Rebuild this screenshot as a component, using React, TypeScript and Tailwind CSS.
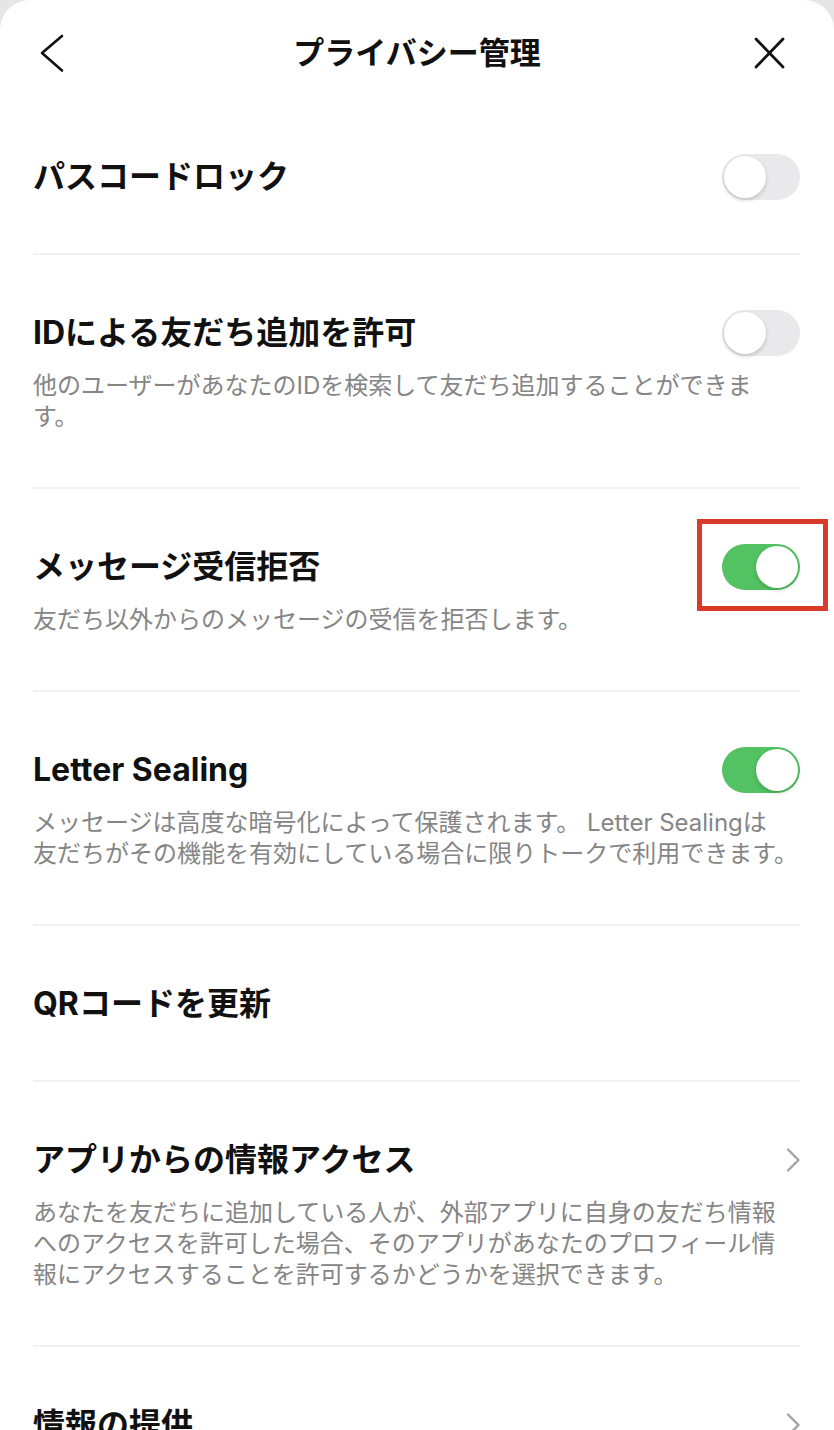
import type { ReactNode } from "react";

/* ─────────────────────────────────────────────
   Privacy settings screen
───────────────────────────────────────────── */
type RowProps = {
  title: string;
  desc?: string[];
  control?: ReactNode;
  last?: boolean;
};

function Toggle({ on }: { on: boolean }) {
  return (
    <div
      className={
        on
          ? "relative w-[78px] h-[46px] rounded-full bg-[#52c262] shrink-0"
          : "relative w-[78px] h-[46px] rounded-full bg-[#e9e9eb] shrink-0"
      }
    >
      <div
        className={
          on
            ? "absolute top-[2px] left-[34px] w-[42px] h-[42px] rounded-full bg-white shadow-[0_2px_4px_rgba(0,0,0,0.18)]"
            : "absolute top-[2px] left-[2px] w-[42px] h-[42px] rounded-full bg-white shadow-[0_2px_4px_rgba(0,0,0,0.18)]"
        }
      />
    </div>
  );
}

function Chevron() {
  return (
    <svg width="16" height="26" viewBox="0 0 16 26" className="shrink-0 mr-[-1px]">
      <path d="M3 2.5 L13.5 13 L3 23.5" fill="none" stroke="#a3a3a3" strokeWidth="2.4" strokeLinecap="round" strokeLinejoin="round" />
    </svg>
  );
}

function Row({ title, desc, control, last }: RowProps) {
  return (
    <div
      className={
        last
          ? "pt-[58px] pb-[58px]"
          : desc
          ? "pt-[58px] pb-[55px] border-b-2 border-[#f1f1f1]"
          : "pt-[58px] pb-[56px] border-b-2 border-[#f1f1f1]"
      }
    >
      <div className="h-[40px] flex items-center justify-between">
        <p className="text-[32px] leading-[40px] font-bold text-[#111111] whitespace-nowrap">{title}</p>
        {control}
      </div>
      {desc && (
        <div className="mt-[17px] text-[24px] leading-[31px] text-[#858585]">
          {desc.map(line => (
            <p key={line} className="whitespace-nowrap">{line}</p>
          ))}
        </div>
      )}
    </div>
  );
}

export default function App() {
  return (
    <div
      className="w-[834px] h-[1430px] overflow-hidden bg-[#e6e6e6]"
      style={{ fontFamily: 'Inter, "Noto Sans CJK JP", "Noto Sans", sans-serif' }}
    >
      <div className="bg-white rounded-t-[30px] h-full">
        {/* ── Header ── */}
        <div className="h-[99px] pt-[6px] grid grid-cols-[1fr_auto_1fr] items-center">
          <div className="flex">
            <svg width="26" height="40" viewBox="0 0 26 40" className="ml-[39px]">
              <path d="M23 3 L3 20 L23 37.5" fill="none" stroke="#111" strokeWidth="2.6" strokeLinecap="round" strokeLinejoin="round" />
            </svg>
          </div>
          <h1 className="text-[31px] font-bold text-[#111111] leading-[40px]">プライバシー管理</h1>
          <div className="flex justify-end">
            <svg width="32" height="32" viewBox="0 0 32 32" className="mr-[49px]">
              <path d="M3 2 L30 30 M30 2 L3 30" fill="none" stroke="#111" strokeWidth="2.8" strokeLinecap="round" />
            </svg>
          </div>
        </div>

        {/* ── Settings list ── */}
        <div className="pl-[33px] pr-[34px]">
          <Row title="パスコードロック" control={<Toggle on={false} />} />
          <Row
            title="IDによる友だち追加を許可"
            desc={["他のユーザーがあなたのIDを検索して友だち追加することができま", "す。"]}
            control={<Toggle on={false} />}
          />
          <Row
            title="メッセージ受信拒否"
            desc={["友だち以外からのメッセージの受信を拒否します。"]}
            control={
              <div className="relative">
                <Toggle on />
                <span className="absolute -left-[25px] -top-[25px] w-[131px] h-[92px] border-[5px] border-[#d93a2a] pointer-events-none" />
              </div>
            }
          />
          <Row
            title="Letter Sealing"
            desc={[
              "メッセージは高度な暗号化によって保護されます。 Letter Sealingは",
              "友だちがその機能を有効にしている場合に限りトークで利用できます。",
            ]}
            control={<Toggle on />}
          />
          <Row title="QRコードを更新" />
          <Row
            title="アプリからの情報アクセス"
            desc={[
              "あなたを友だちに追加している人が、外部アプリに自身の友だち情報",
              "へのアクセスを許可した場合、そのアプリがあなたのプロフィール情",
              "報にアクセスすることを許可するかどうかを選択できます。",
            ]}
            control={<Chevron />}
          />
          <Row title="情報の提供" control={<Chevron />} last />
        </div>
      </div>
    </div>
  );
}
